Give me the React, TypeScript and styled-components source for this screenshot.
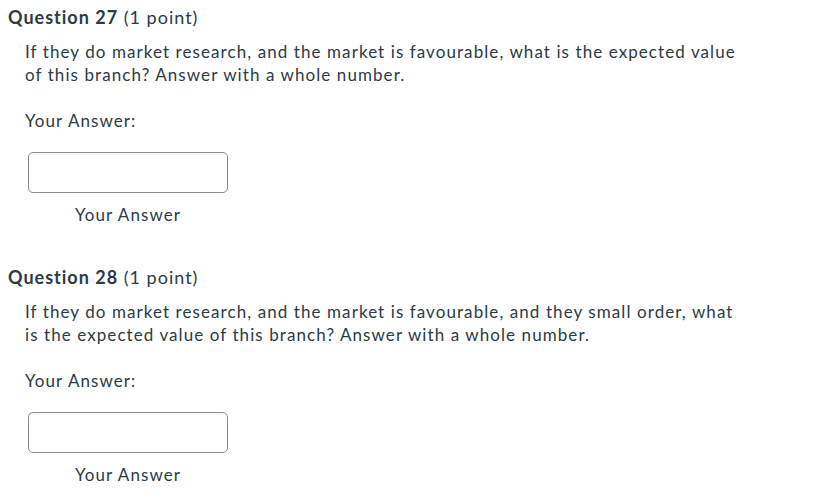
import React from 'react';
import styled, { createGlobalStyle } from 'styled-components';

const GlobalStyle = createGlobalStyle`
  body {
    margin: 0;
    background: #fff;
    font-family: Lato, "Open Sans", sans-serif;
    color: #2d3b45;
  }
`;

const Page = styled.div`
  padding: 6px 8px 0;
`;

const QuestionBlock = styled.section`
  margin-bottom: 40px;
`;

const Heading = styled.h2`
  margin: 0;
  font-size: 18px;
  line-height: 22px;
  font-weight: 400;
  letter-spacing: 1px;
  color: #2d3b45;

  strong {
    font-weight: 700;
  }
`;

const Body = styled.div`
  padding: 0 17px;
  font-size: 17px;
  line-height: 23px;
  letter-spacing: 1.08px;
`;

const Prompt = styled.p`
  margin: 12px 0 0;
  max-width: 720px;
`;

const AnswerLabel = styled.p`
  margin: 23px 0 0;
`;

const InputWrap = styled.div`
  display: flex;
  flex-direction: column;
  align-items: center;
  width: 200px;
  margin: 20px 0 0 3px;
`;

const TextInput = styled.input`
  box-sizing: border-box;
  width: 200px;
  height: 41px;
  border: 1px solid #888f94;
  border-radius: 5px;
  box-shadow: inset 0 1px 2px rgba(0, 0, 0, 0.06);
  background: #fff;
  font: inherit;
  padding: 0 10px;
  outline: none;
`;

const InputCaption = styled.span`
  margin-top: 10px;
`;

const questions = [
  {
    number: 27,
    points: '(1 point)',
    text: 'If they do market research, and the market is favourable, what is the expected value of this branch? Answer with a whole number.',
  },
  {
    number: 28,
    points: '(1 point)',
    text: 'If they do market research, and the market is favourable, and they small order, what is the expected value of this branch? Answer with a whole number.',
  },
];

const App: React.FC = () => {
  return (
    <>
      <GlobalStyle />
      <Page>
        {questions.map((q) => (
          <QuestionBlock key={q.number}>
            <Heading>
              <strong>Question {q.number}</strong> {q.points}
            </Heading>
            <Body>
              <Prompt>{q.text}</Prompt>
              <AnswerLabel>Your Answer:</AnswerLabel>
              <InputWrap>
                <TextInput type="text" aria-label="Your Answer" />
                <InputCaption>Your Answer</InputCaption>
              </InputWrap>
            </Body>
          </QuestionBlock>
        ))}
      </Page>
    </>
  );
};

export default App;
